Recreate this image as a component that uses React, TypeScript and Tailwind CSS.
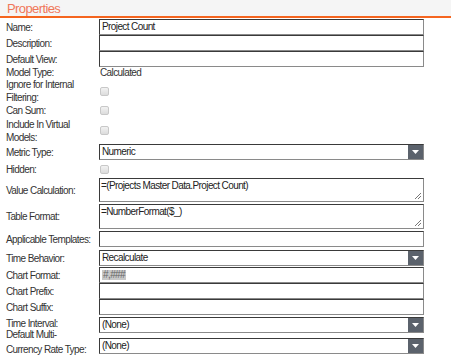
import type { ReactNode } from "react";

const font = { fontFamily: '"Liberation Sans", Arial, sans-serif' };

function Box({ children }: { children?: ReactNode }) {
  return (
    <div className="w-[325px] h-[16px] border border-t-[#3a3a3a] border-l-[#3a3a3a] border-b-[#8a8a8a] border-r-[#8a8a8a] bg-white flex items-center px-[2px] text-[10px] tracking-[-0.6px] text-[#222] leading-none whitespace-nowrap">
      {children}
    </div>
  );
}

function Area({ text }: { text: string }) {
  return (
    <div className="relative w-[325px] h-full border border-t-[#3a3a3a] border-l-[#3a3a3a] border-b-[#8a8a8a] border-r-[#8a8a8a] bg-white px-[1px] pt-[1px] text-[10px] tracking-[-0.6px] text-[#222] leading-[12px] whitespace-nowrap">
      {text}
      <svg className="absolute right-[2px] bottom-[2px]" width="7" height="7" viewBox="0 0 7 7">
        <path d="M1 7L7 1M4 7L7 4" stroke="#777" strokeWidth="1" />
      </svg>
    </div>
  );
}

function Select({ value }: { value: string }) {
  return (
    <div className="w-[325px] h-[16px] flex border border-t-[#3a3a3a] border-l-[#3a3a3a] border-b-[#8a8a8a] border-r-[#8a8a8a] bg-white">
      <div className="flex-1 flex items-center px-[2px] text-[10px] tracking-[-0.6px] text-[#222] leading-none">{value}</div>
      <div className="w-[15px] h-full bg-[#5b626c] flex items-center justify-center">
        <svg width="7" height="4" viewBox="0 0 7 4">
          <path d="M0 0H7L3.5 4Z" fill="#fff" />
        </svg>
      </div>
    </div>
  );
}

function Check() {
  return <div className="w-[9px] h-[9px] rounded-[2px] border border-[#c8c8c8] bg-gradient-to-b from-[#f2f2f2] to-[#dcdcdc]" />;
}

function Row({
  label,
  h,
  mt = "",
  lc = "",
  children,
}: {
  label: ReactNode;
  h: string;
  mt?: string;
  lc?: string;
  children?: ReactNode;
}) {
  return (
    <div className={`flex ${h} ${mt}`}>
      <div className={`w-[93px] flex items-center text-[10px] tracking-[-0.6px] leading-[13px] text-[#333] whitespace-nowrap ${lc}`}>{label}</div>
      <div className="flex items-center">{children}</div>
    </div>
  );
}

export default function App() {
  return (
    <div className="w-[451px] h-[361px] bg-white overflow-hidden" style={font}>
      <div className="h-[18px] bg-[#f5f5f5] border-b-2 border-[#f5651f] px-[7px] flex items-center">
        <span className="text-[13px] tracking-[-0.6px] text-[#f0775a] leading-none">Properties</span>
      </div>
      <div className="pl-[6px] pt-[1px]">
        <Row label="Name:" h="h-[16px]">
          <Box>Project Count</Box>
        </Row>
        <Row label="Description:" h="h-[16px]">
          <Box />
        </Row>
        <Row label="Default View:" h="h-[16px]">
          <Box />
        </Row>
        <Row label="Model Type:" h="h-[11px]">
          <span className="text-[10px] tracking-[-0.6px] text-[#333] leading-none pl-[1px]">Calculated</span>
        </Row>
        <Row label={<span>Ignore for Internal<br />Filtering:</span>} h="h-[25px]">
          <div className="pl-[1px] pt-[2px]"><Check /></div>
        </Row>
        <Row label="Can Sum:" h="h-[14px]">
          <div className="pl-[1px]"><Check /></div>
        </Row>
        <Row label={<span>Include In Virtual<br />Models:</span>} h="h-[27px]">
          <div className="pl-[1px]"><Check /></div>
        </Row>
        <Row label="Metric Type:" h="h-[16px]">
          <Select value="Numeric" />
        </Row>
        <Row label="Hidden:" h="h-[18px]">
          <div className="pl-[1px]"><Check /></div>
        </Row>
        <Row label="Value Calculation:" h="h-[24px]">
          <Area text="=(Projects Master Data.Project Count)" />
        </Row>
        <Row label="Table Format:" h="h-[25px]" mt="mt-[2px]">
          <Area text="=NumberFormat($_)" />
        </Row>
        <Row label="Applicable Templates:" h="h-[16px]" mt="mt-[2px]">
          <Box />
        </Row>
        <Row label="Time Behavior:" h="h-[16px]" mt="mt-[3px]">
          <Select value="Recalculate" />
        </Row>
        <Row label="Chart Format:" h="h-[16px]" mt="mt-[1px]">
          <Box>
            <span className="bg-[#c8c8c8] text-[#666] px-[1px]">#,###</span>
          </Box>
        </Row>
        <Row label="Chart Prefix:" h="h-[16px]">
          <Box />
        </Row>
        <Row label="Chart Suffix:" h="h-[16px]">
          <Box />
        </Row>
        <Row label="Time Interval:" h="h-[16px]" mt="mt-[2px]" lc="pb-[3px]">
          <Select value="(None)" />
        </Row>
        <div className="flex h-[24px]">
          <div className="w-[93px] -mt-[6px] text-[10px] tracking-[-0.6px] leading-[15px] text-[#333] whitespace-nowrap">
            Default Multi-
            <br />
            Currency Rate Type:
          </div>
          <div className="pt-[5px]">
            <Select value="(None)" />
          </div>
        </div>
      </div>
    </div>
  );
}
